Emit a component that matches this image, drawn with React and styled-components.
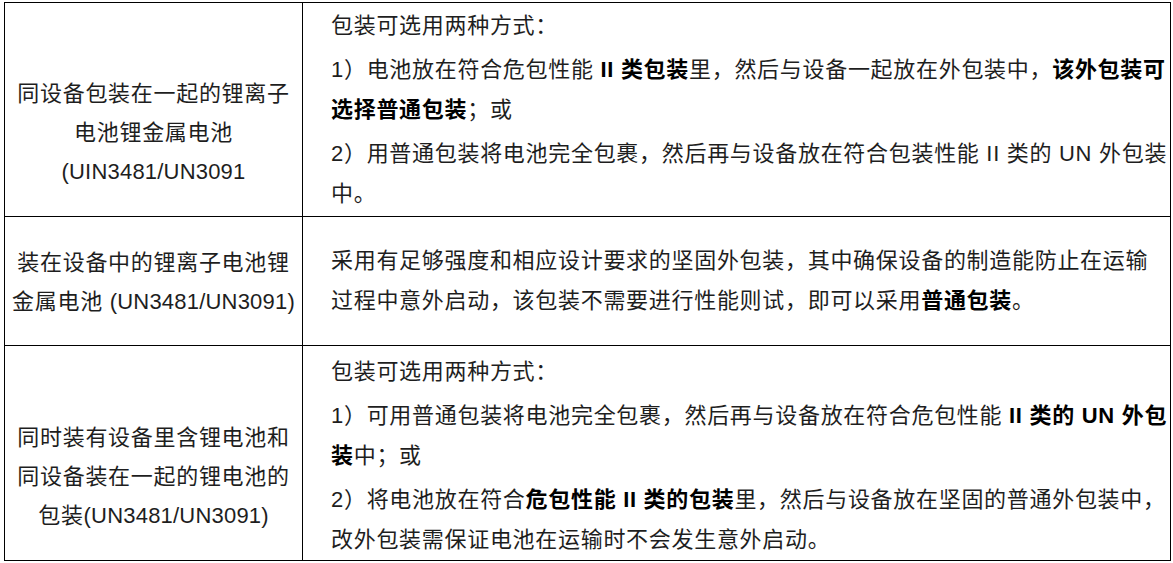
import React from "react";
import styled, { createGlobalStyle } from "styled-components";

const GlobalStyle = createGlobalStyle`
  html, body {
    margin: 0;
    padding: 0;
    background: #fff;
  }
  body {
    font-family: "Liberation Sans", "Noto Sans CJK SC", sans-serif;
    color: #1e1e1e;
  }
`;

const Page = styled.div`
  padding: 2px 0 0 4px;
`;

const Table = styled.table`
  border-collapse: collapse;
  table-layout: fixed;
  width: 1166px;
  font-size: 22px;
  letter-spacing: 0.7px;
`;

export const Tr = styled.tr`
  height: ${(props) => props.height}px;
`;

// the name column sits a bit low in the tall rows
const NameCell = styled.td`
  border: 1px solid #000;
  padding: ${(props) => props.shift || 0}px 4px 0;
  text-align: center;
  vertical-align: middle;
  line-height: 39px;
  white-space: nowrap;
`;

const RuleCell = styled.td`
  border: 1px solid #000;
  padding: ${(props) => props.shift || 0}px 0 0 28px;
  text-align: left;
  vertical-align: middle;
  line-height: 40px;
  white-space: nowrap;
`;

const Para = styled.p`
  margin: 0;
  & + & {
    margin-top: 4px;
  }
`;

const Latin = styled.span`
  letter-spacing: 0.2px;
`;

const B = styled.b`
  font-weight: 700;
  color: #000;
`;

const rows = [
  {
    height: 214,
    shift: 46,
    name: ["同设备包装在一起的锂离子", "电池锂金属电池", <Latin>(UIN3481/UN3091</Latin>],
    rule: [
      ["包装可选用两种方式："],
      [
        <>1）电池放在符合危包性能 <B>II 类包装</B>里，然后与设备一起放在外包装中，<B>该外包装可</B></>,
        <><B>选择普通包装</B>；或</>,
      ],
      [
        "2）用普通包装将电池完全包裹，然后再与设备放在符合包装性能 II 类的 UN 外包装",
        "中。",
      ],
    ],
  },
  {
    height: 129,
    shift: 2,
    name: ["装在设备中的锂离子电池锂", <>金属电池 <Latin>(UN3481/UN3091)</Latin></>],
    rule: [
      [
        "采用有足够强度和相应设计要求的坚固外包装，其中确保设备的制造能防止在运输",
        <>过程中意外启动，该包装不需要进行性能则试，即可以采用<B>普通包装</B>。</>,
      ],
    ],
  },
  {
    height: 213,
    shift: 46,
    ruleShift: 6,
    name: ["同时装有设备里含锂电池和", "同设备装在一起的锂电池的", <>包装<Latin>(UN3481/UN3091)</Latin></>],
    rule: [
      ["包装可选用两种方式："],
      [
        <>1）可用普通包装将电池完全包裹，然后再与设备放在符合危包性能 <B>II 类的 UN 外包</B></>,
        <><B>装</B>中；或</>,
      ],
      [
        <>2）将电池放在符合<B>危包性能 II 类的包装</B>里，然后与设备放在坚固的普通外包装中，</>,
        "改外包装需保证电池在运输时不会发生意外启动。",
      ],
    ],
  },
];

const App = () => {
  return (
    <Page>
      <GlobalStyle />
      <Table>
        <colgroup>
          <col style={{ width: "298px" }} />
          <col style={{ width: "868px" }} />
        </colgroup>
        <tbody>
          {rows.map((row, i) => (
            <Tr key={i} height={row.height}>
              <NameCell shift={row.shift}>
                {row.name.map((line, j) => (
                  <div key={j}>{line}</div>
                ))}
              </NameCell>
              <RuleCell shift={row.ruleShift}>
                {row.rule.map((para, j) => (
                  <Para key={j}>
                    {para.map((line, k) => (
                      <React.Fragment key={k}>
                        {k > 0 && <br />}
                        {line}
                      </React.Fragment>
                    ))}
                  </Para>
                ))}
              </RuleCell>
            </Tr>
          ))}
        </tbody>
      </Table>
    </Page>
  );
};

export default App;
